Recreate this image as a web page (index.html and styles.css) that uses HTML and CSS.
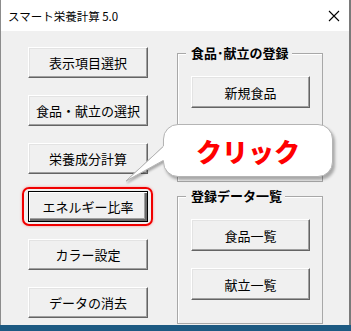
FILE: index.html
```html
<!DOCTYPE html>
<html lang="ja">
<head>
  <meta charset="UTF-8" />
  <title>スマート栄養計算 5.0</title>
  <link rel="stylesheet" href="styles.css">
</head>
<body>

  <div class="window">
    <!-- タイトルバー -->
    <div class="titlebar">
      <span class="title">スマート栄養計算 5.0</span>
      <svg class="close" width="12" height="12" viewBox="0 0 12 12">
        <path d="M1 1 L11 11 M11 1 L1 11" stroke="#000" stroke-width="1.1" fill="none"/>
      </svg>
    </div>

    <div class="content">
      <!-- 左側のメニュー -->
      <div class="menu">
        <button class="btn">表示項目選択</button>
        <button class="btn">食品・献立の選択</button>
        <button class="btn">栄養成分計算</button>
        <div class="highlight">
          <button class="btn default">エネルギー比率</button>
        </div>
        <button class="btn">カラー設定</button>
        <button class="btn">データの消去</button>
      </div>

      <!-- 右側のグループ -->
      <div class="side">
        <div class="group group-entry">
          <span class="legend">食品･献立の登録</span>
          <button class="btn">新規食品</button>
        </div>
        <div class="group group-list">
          <span class="legend">登録データ一覧</span>
          <button class="btn">食品一覧</button>
          <button class="btn">献立一覧</button>
        </div>
      </div>
    </div>

    <!-- 吹き出し (しっぽは影付きで下に、つなぎ目は上から白で隠す) -->
    <svg class="tail tail-shadow" width="50" height="45" viewBox="0 0 50 45">
      <polygon points="44,3 4,40 44,18" fill="#fff" stroke="#b4b4b4" stroke-width="1"/>
    </svg>
    <div class="callout">クリック</div>
    <svg class="tail" width="50" height="45" viewBox="0 0 50 45">
      <polygon points="44,3 4,40 44,18" fill="#fff"/>
      <polyline points="41,5.8 4,40 41,19.6" fill="none" stroke="#b4b4b4" stroke-width="1"/>
    </svg>
  </div>

</body>
</html>
```

FILE: styles.css
```css
body {
  margin: 0;
  background-color: #1d5a82;
  font-family: "Noto Sans CJK JP", sans-serif;
  height: 331px;
  overflow: hidden;
}

.window {
  position: relative;
  width: 348px;
  height: 325px;
  border-left: 1px solid #8c8c8c;
  border-right: 2px solid #7a7a7a;
  background-color: #f0f0f0;
}

.titlebar {
  height: 31px;
  background-color: #fff;
  display: flex;
  align-items: center;
  justify-content: space-between;
  padding: 0 9px 0 7px;
}

.title {
  font-size: 11.5px;
  color: #000;
}

.content {
  display: flex;
  padding-top: 16px;
}

.menu {
  display: flex;
  flex-direction: column;
  gap: 17px;
  margin-left: 27px;
  width: 120px;
}

.btn {
  display: block;
  width: 120px;
  height: 31px;
  padding: 0;
  font-family: "Noto Sans CJK JP", sans-serif;
  font-size: 13px;
  color: #000;
  background-color: #f0f0f0;
  border: 1px solid;
  border-color: #fff #646464 #646464 #fff;
  box-shadow: inset -1px -1px #a0a0a0, inset 1px 1px #e3e3e3;
}

/* 赤い枠で囲まれたボタン */
.highlight {
  margin: -4px -5px -4px -6px;
  padding: 2px 3px 2px 4px;
  border: 2px solid #f00000;
  border-radius: 7px;
  box-shadow: 0 0 3px rgba(255, 0, 0, 0.35);
}

.btn.default {
  border-color: #000;
  box-shadow: inset 1px 1px #fff, inset -2px -2px #696969, inset -3px -3px #a0a0a0;
}

.side {
  margin-left: 29px;
  padding-top: 6px;
  display: flex;
  flex-direction: column;
  gap: 14px;
}

.group {
  border: 1px solid #a8a8a8;
  box-shadow: inset 1px 1px #fff;
  display: flex;
  flex-direction: column;
  gap: 17px;
  padding-left: 13px;
  box-sizing: border-box;
  width: 146px;
}

.group-entry {
  height: 129px;
}

.group-list {
  height: 128px;
}

.group .btn {
  width: 119px;
  height: 32px;
}

.legend {
  align-self: flex-start;
  margin: -10px 0 -3px -5px;
  padding: 0 3px 0 5px;
  background-color: #f0f0f0;
  font-size: 13px;
  font-weight: bold;
  line-height: 18px;
}

.callout {
  position: absolute;
  left: 162px;
  top: 124px;
  width: 170px;
  height: 53px;
  box-sizing: border-box;
  background-color: #fff;
  border: 1px solid #b4b4b4;
  border-radius: 15px;
  box-shadow: 2px 3px 3px rgba(0, 0, 0, 0.3);
  display: flex;
  align-items: center;
  justify-content: center;
  color: #ff0000;
  font-size: 26px;
  font-weight: 900;
}

.tail {
  position: absolute;
  left: 121px;
  top: 141px;
}

.tail-shadow {
  filter: drop-shadow(1px 2px 1px rgba(0, 0, 0, 0.3));
}
```
